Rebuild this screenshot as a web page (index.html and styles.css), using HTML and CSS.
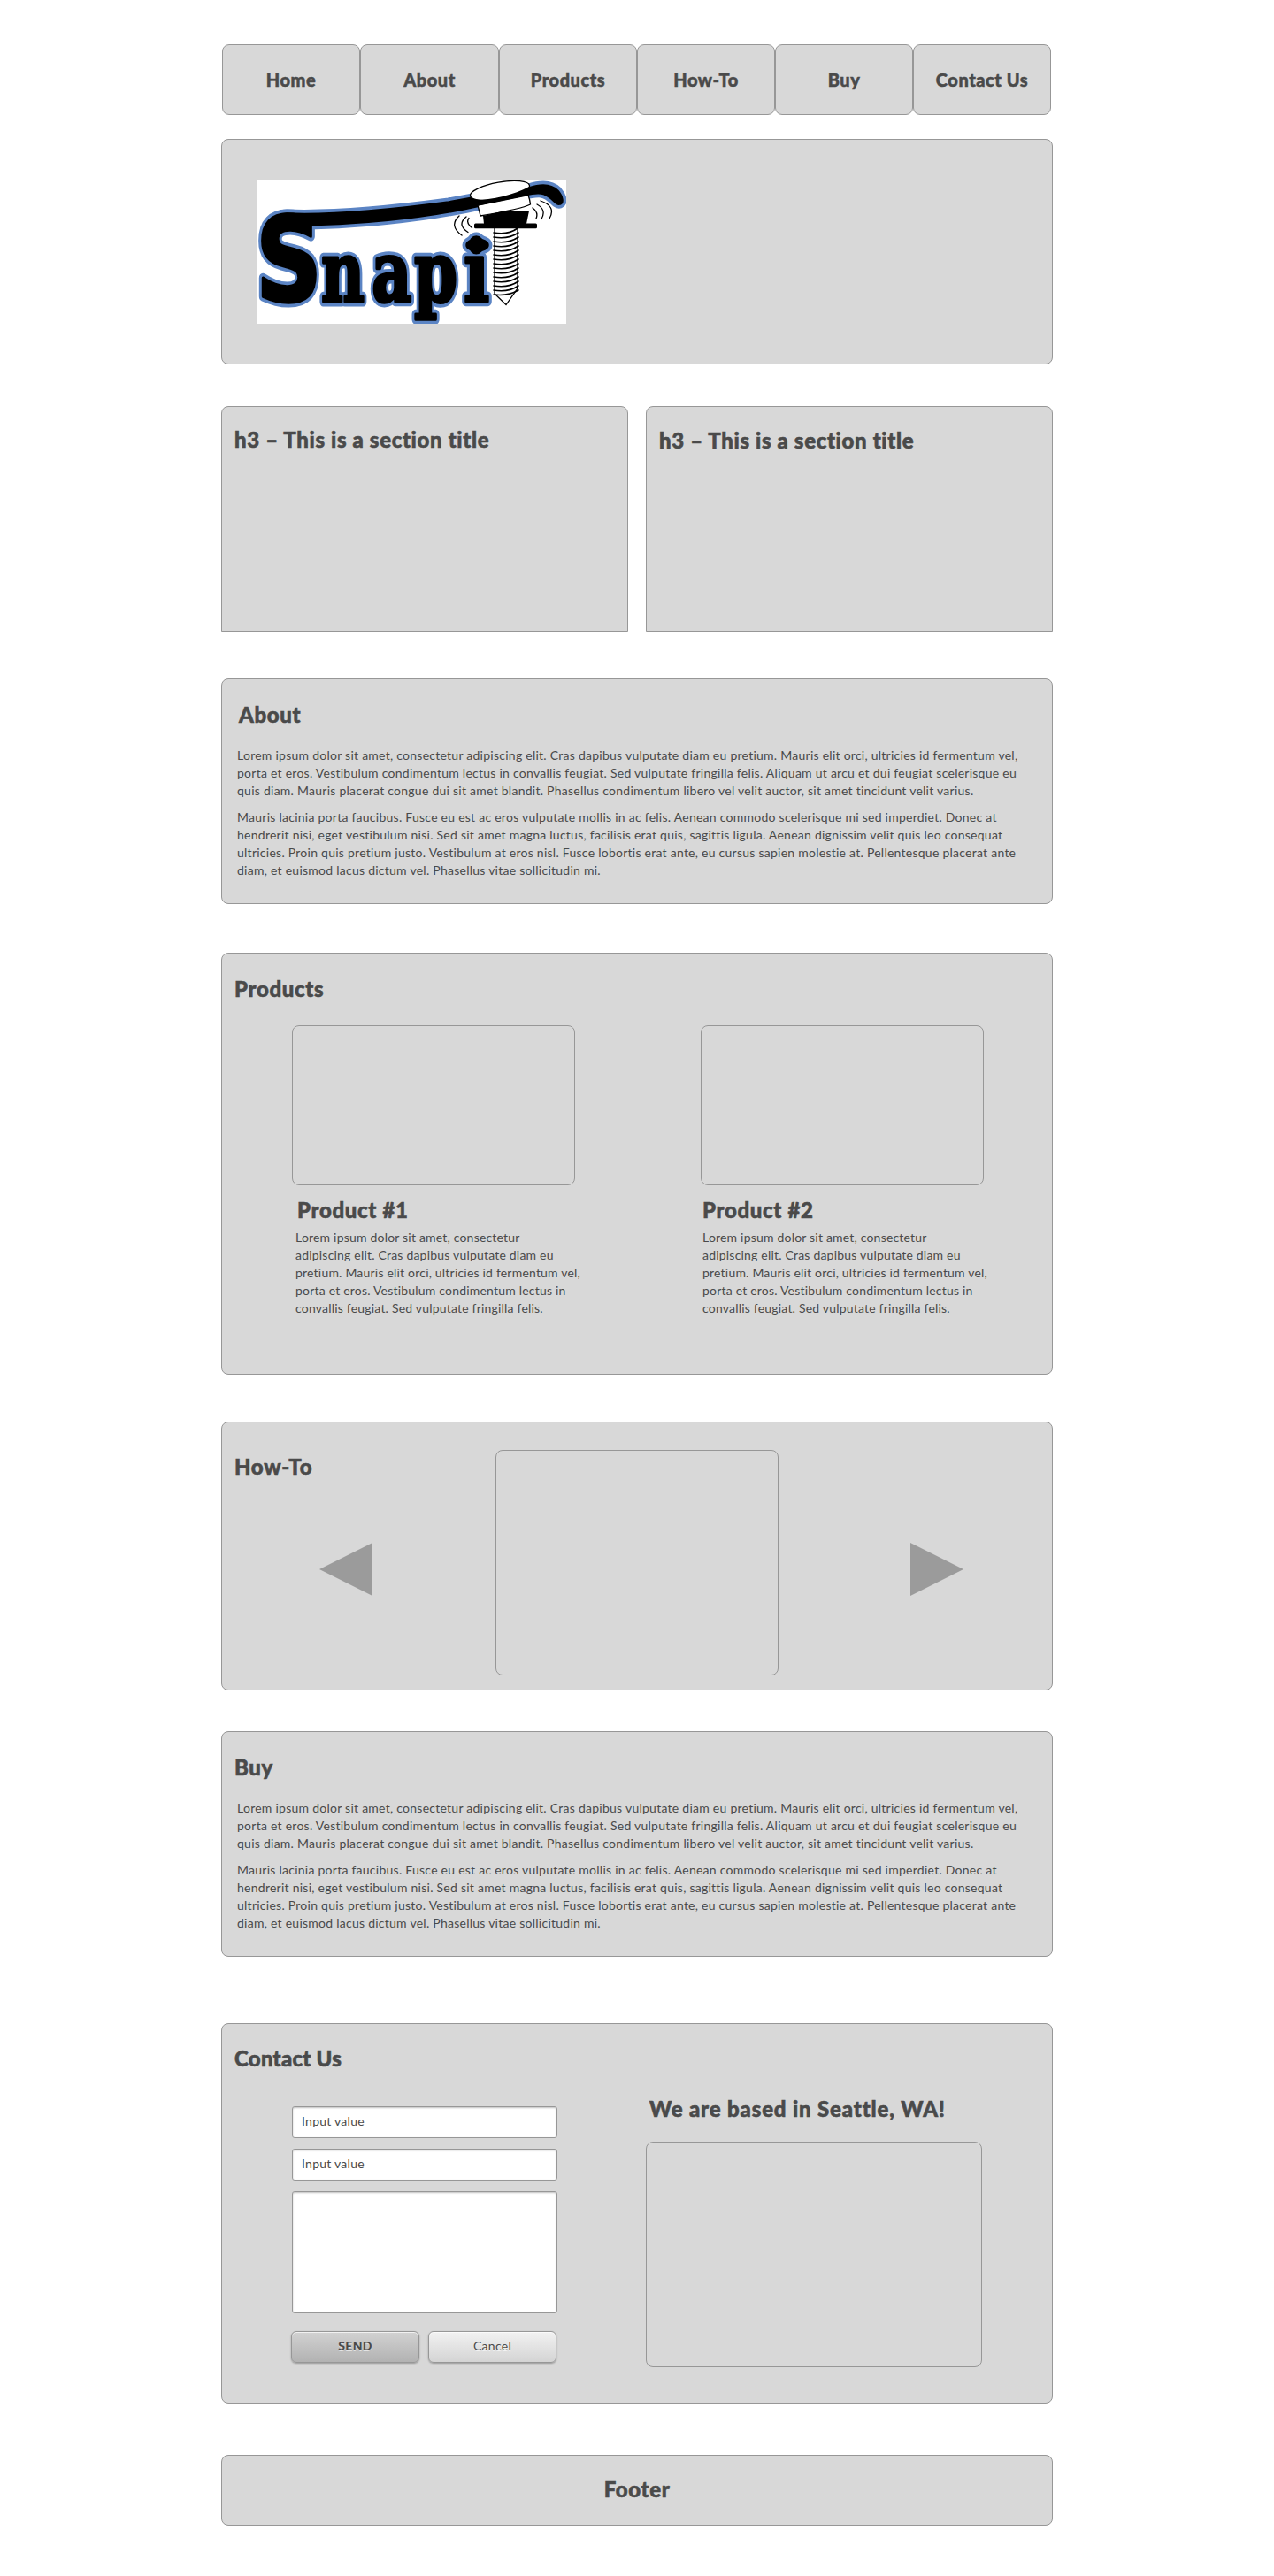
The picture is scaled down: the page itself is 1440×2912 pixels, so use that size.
FILE: index.html
```html
<!DOCTYPE html>
<html lang="en">
<head>
<meta charset="utf-8">
<title>Snapit</title>
<link rel="stylesheet" href="styles.css">
</head>
<body>
<div class="page">
  <nav class="nav">
    <a class="tab">Home</a>
    <a class="tab">About</a>
    <a class="tab">Products</a>
    <a class="tab">How-To</a>
    <a class="tab">Buy</a>
    <a class="tab">Contact Us</a>
  </nav>

  <header class="panel hero">
    <svg class="logo" width="350" height="162" viewBox="0 0 350 162" role="img" aria-label="Snapit">
      <defs>
        <g id="word">
          <text class="cap" transform="translate(-1 136) scale(.79 1)">S</text>
          <text class="low" transform="translate(73 137) scale(.71 1)">n</text>
          <text class="low" transform="translate(130 137) scale(.74 1)">a</text>
          <text class="low" transform="translate(178 137) scale(.74 1)">p</text>
          <text class="low" transform="translate(234 137) scale(.81 1)">i</text>
          <ellipse cx="249.500" cy="73" rx="11.500" ry="6"/>
          <path d="M34 38C85 40 150 34 217 25L250 19L308 9C323 4 333 5 340 12C346 19 346 25 343 26C338 28 334 16 322 14C312 12 300 18 250 28.500C190 42 110 50 40 50C28 50 14 62 12 74C10 56 20 38 34 38Z"/>
        </g>
      </defs>
      <rect width="350" height="162" fill="#fff"/>
      <use href="#word" class="rim"/>
      <use href="#word" class="ink"/>
      <g class="line">
        <ellipse cx="275" cy="11.500" rx="34" ry="9.500" transform="rotate(-10 275 11.500)" fill="#fff"/>
        <path d="M250 28L307 16.500Q309 22 309.500 27Q300 32 253 40Z" fill="#fff"/>
      </g>
      <path d="M242 22C262 23 290 17 308 7V16.500L250 28.500Z"/>
      <path d="M256 40L279 34.500H308L305 49H257Z"/>
      <rect x="246" y="48.500" width="71" height="5.700" rx="1.500"/>
      <g class="line">
        <path d="M269 54V128L282 140.500L295 122V54"/>
        <path class="thread" d="M268 59Q284 62 295 54M268 64Q284 67 296 59M268 69Q284 72 296 64M268 74Q284 77 296 69M268 79Q284 82 296 74M268 84Q284 87 296 79M268 89Q284 92 296 84M268 94Q284 97 296 89M268 99Q284 102 296 94M268 104Q284 107 296 99M268 109Q284 112 296 104M268 114Q284 117 296 109M268 119Q284 122 296 114M268 124Q284 127 296 119M268 129Q284 131 296 124"/>
        <path d="M229 40Q217 51 232 62M237 41Q226 50 239 58.500M240 42.500Q236 48 243.500 53.500M312 31Q319 36 316 43M317 27Q328 33 322 43.500M321 23Q339 29 331 43"/>
      </g>
    </svg>
  </header>

  <div class="cards">
    <section class="card">
      <h3 class="title card-title">h3 – This is a section title</h3>
    </section>
    <section class="card">
      <h3 class="title card-title card-title-low">h3 – This is a section title</h3>
    </section>
  </div>

  <section class="panel article about">
    <h3 class="title">About</h3>
    <div class="copy">
      <p>Lorem ipsum dolor sit amet, consectetur adipiscing elit. Cras dapibus vulputate diam eu pretium. Mauris elit orci, ultricies id fermentum vel,<br>porta et eros. Vestibulum condimentum lectus in convallis feugiat. Sed vulputate fringilla felis. Aliquam ut arcu et dui feugiat scelerisque eu<br>quis diam. Mauris placerat congue dui sit amet blandit. Phasellus condimentum libero vel velit auctor, sit amet tincidunt velit varius.</p>
      <p>Mauris lacinia porta faucibus. Fusce eu est ac eros vulputate mollis in ac felis. Aenean commodo scelerisque mi sed imperdiet. Donec at<br>hendrerit nisi, eget vestibulum nisi. Sed sit amet magna luctus, facilisis erat quis, sagittis ligula. Aenean dignissim velit quis leo consequat<br>ultricies. Proin quis pretium justo. Vestibulum at eros nisl. Fusce lobortis erat ante, eu cursus sapien molestie at. Pellentesque placerat ante<br>diam, et euismod lacus dictum vel. Phasellus vitae sollicitudin mi.</p>
    </div>
  </section>

  <section class="panel products">
    <h3 class="title">Products</h3>
    <div class="product-list">
      <article class="product">
        <div class="frame"></div>
        <h3 class="title product-title first">Product #1</h3>
        <p class="copy first-copy">Lorem ipsum dolor sit amet, consectetur<br>adipiscing elit. Cras dapibus vulputate diam eu<br>pretium. Mauris elit orci, ultricies id fermentum vel,<br>porta et eros. Vestibulum condimentum lectus in<br>convallis feugiat. Sed vulputate fringilla felis.</p>
      </article>
      <article class="product">
        <div class="frame"></div>
        <h3 class="title product-title">Product #2</h3>
        <p class="copy">Lorem ipsum dolor sit amet, consectetur<br>adipiscing elit. Cras dapibus vulputate diam eu<br>pretium. Mauris elit orci, ultricies id fermentum vel,<br>porta et eros. Vestibulum condimentum lectus in<br>convallis feugiat. Sed vulputate fringilla felis.</p>
      </article>
    </div>
  </section>

  <section class="panel howto">
    <div class="howto-side">
      <h3 class="title">How-To</h3>
      <svg class="arrow" width="60" height="60" viewBox="0 0 60 60"><path d="M0 30L60 0V60Z"/></svg>
    </div>
    <div class="frame slide"></div>
    <svg class="arrow arrow-next" width="60" height="60" viewBox="0 0 60 60"><path d="M60 30L0 0V60Z"/></svg>
  </section>

  <section class="panel article buy">
    <h3 class="title">Buy</h3>
    <div class="copy">
      <p>Lorem ipsum dolor sit amet, consectetur adipiscing elit. Cras dapibus vulputate diam eu pretium. Mauris elit orci, ultricies id fermentum vel,<br>porta et eros. Vestibulum condimentum lectus in convallis feugiat. Sed vulputate fringilla felis. Aliquam ut arcu et dui feugiat scelerisque eu<br>quis diam. Mauris placerat congue dui sit amet blandit. Phasellus condimentum libero vel velit auctor, sit amet tincidunt velit varius.</p>
      <p>Mauris lacinia porta faucibus. Fusce eu est ac eros vulputate mollis in ac felis. Aenean commodo scelerisque mi sed imperdiet. Donec at<br>hendrerit nisi, eget vestibulum nisi. Sed sit amet magna luctus, facilisis erat quis, sagittis ligula. Aenean dignissim velit quis leo consequat<br>ultricies. Proin quis pretium justo. Vestibulum at eros nisl. Fusce lobortis erat ante, eu cursus sapien molestie at. Pellentesque placerat ante<br>diam, et euismod lacus dictum vel. Phasellus vitae sollicitudin mi.</p>
    </div>
  </section>

  <section class="panel contact">
    <div class="contact-left">
      <h3 class="title contact-title">Contact Us</h3>
      <form class="form">
        <input class="field" type="text" value="Input value">
        <input class="field" type="text" value="Input value">
        <textarea class="field area"></textarea>
        <div class="buttons">
          <button class="button primary" type="button">SEND</button>
          <button class="button" type="button">Cancel</button>
        </div>
      </form>
    </div>
    <div class="place">
      <h3 class="title place-title">We are based in Seattle, WA!</h3>
      <div class="frame map"></div>
    </div>
  </section>

  <footer class="panel footer">
    <h3 class="title">Footer</h3>
  </footer>
</div>
</body>
</html>
```
FILE: styles.css
```css
* { box-sizing: border-box; }

body {
  margin: 0;
  background: #fff;
  color: #4a4a4a;
  font-family: Lato, "Open Sans", sans-serif;
  font-size: 14px;
  line-height: 20px;
}

h3, p { margin: 0; }

.page {
  width: 940px;
  height: 2912px;
  margin: 0 auto;
  padding-top: 50px;
}

.nav {
  display: grid;
  grid-template-columns: 156px 157px repeat(4, 156px);
  height: 80px;
  margin: 0 2px 27px 1px;
}

.tab {
  display: flex;
  align-items: center;
  justify-content: center;
  border: 1px solid #979797;
  border-radius: 8px;
  background: #d8d8d8;
  font-size: 20px;
  font-weight: 900;
  line-height: 24px;
  letter-spacing: .55px;
  -webkit-text-stroke: .5px #4a4a4a;
}

.panel {
  border: 1px solid #979797;
  border-radius: 8px;
  background: #d8d8d8;
}

.title {
  font-size: 24px;
  font-weight: 900;
  line-height: 30px;
  letter-spacing: .65px;
  white-space: nowrap;
  -webkit-text-stroke: .6px #4a4a4a;
}

.copy { letter-spacing: .255px; }

.hero {
  height: 255px;
  padding: 46px 39px;
}

.logo { display: block; }
.cap { font: bold 132px "DejaVu Sans", sans-serif; }
.low { font: bold 95px "DejaVu Serif", serif; }
.rim { fill: #5b84c4; stroke: #5b84c4; stroke-width: 11px; stroke-linejoin: round; }
.ink { fill: #000; stroke: #000; stroke-width: 3.5px; stroke-linejoin: round; }
.line { fill: none; stroke: #000; stroke-width: 1.3px; stroke-linecap: round; }
.thread { stroke-width: 1.6px; }

.cards {
  display: grid;
  grid-template-columns: 460px 460px;
  gap: 20px;
  margin-top: 47px;
}

.card {
  height: 255px;
  border: 1px solid #979797;
  border-radius: 8px 8px 0 0;
  background: #d8d8d8;
}

.card-title {
  height: 74px;
  padding: 22px 0 0 14px;
  border-bottom: 1px solid #979797;
}
.card-title-low { padding-top: 23px; }

.article {
  height: 255px;
  padding: 25px 17px 0 14px;
}
.article .copy { padding: 21px 0 0 3px; white-space: nowrap; }
.article .copy p + p { margin-top: 10px; }

.about { margin-top: 53px; }
.about .title { padding-left: 5px; }

.products {
  height: 477px;
  margin-top: 55px;
  padding: 25px 0 0 14px;
}

.product-list {
  display: flex;
  gap: 142px;
  padding: 26px 0 0 65px;
}

.product { width: 320px; white-space: nowrap; }

.frame {
  height: 181px;
  border: 1px solid #979797;
  border-radius: 8px;
}

.product-title { padding: 13px 0 0 2px; }
.product-title.first { padding-left: 6px; }
.product .copy { padding: 6px 0 0 2px; letter-spacing: .2px; }
.product .first-copy { padding-left: 4px; }

.howto {
  display: flex;
  height: 304px;
  margin-top: 53px;
  padding: 31px 0 0 14px;
}

.howto-side { width: 295px; padding-top: 4px; }
.howto-side .arrow { margin: 71px 0 0 96px; }
.slide { width: 320px; height: 255px; }
.arrow { display: block; fill: #9b9b9b; }
.arrow-next { margin: 105px 0 0 149px; }

.buy { margin-top: 46px; }

.contact {
  display: flex;
  height: 430px;
  margin-top: 75px;
  padding: 24px 0 0 14px;
}

.contact-left { width: 465px; }
.contact-title { letter-spacing: .25px; }

.form {
  display: flex;
  flex-direction: column;
  gap: 12px;
  width: 300px;
  margin: 39px 0 0 65px;
}

.field {
  width: 300px;
  height: 36px;
  margin: 0;
  padding: 0 10px 3px;
  border: 1px solid #979797;
  border-radius: 3px;
  background: #fff;
  box-shadow: inset 0 1px 2px rgba(0, 0, 0, .25);
  color: #4a4a4a;
  font: 14px/20px Lato, sans-serif;
  letter-spacing: .25px;
  resize: none;
}
.area { display: block; height: 138px; }

.buttons {
  display: flex;
  gap: 10px;
  margin: 8px 0 0 -1px;
}

.button {
  width: 145px;
  height: 36px;
  padding: 0 0 2px;
  border: 1px solid #979797;
  border-radius: 6px;
  background: linear-gradient(#f2f2f2, #d4d4d4);
  box-shadow: 0 1px 2px rgba(0, 0, 0, .3), inset 0 1px 0 rgba(255, 255, 255, .7);
  color: #4a4a4a;
  font: 14px/20px Lato, sans-serif;
  letter-spacing: .3px;
  text-shadow: 0 1px 0 rgba(255, 255, 255, .6);
}
.primary {
  background: linear-gradient(#d2d2d2, #b2b2b2);
  font-weight: 900;
}

.place { width: 380px; padding-top: 57px; }
.place-title { padding-left: 4px; letter-spacing: .85px; }
.map { height: 255px; margin-top: 22px; }

.footer {
  display: flex;
  justify-content: center;
  height: 80px;
  margin-top: 58px;
  padding-top: 23px;
}
```
